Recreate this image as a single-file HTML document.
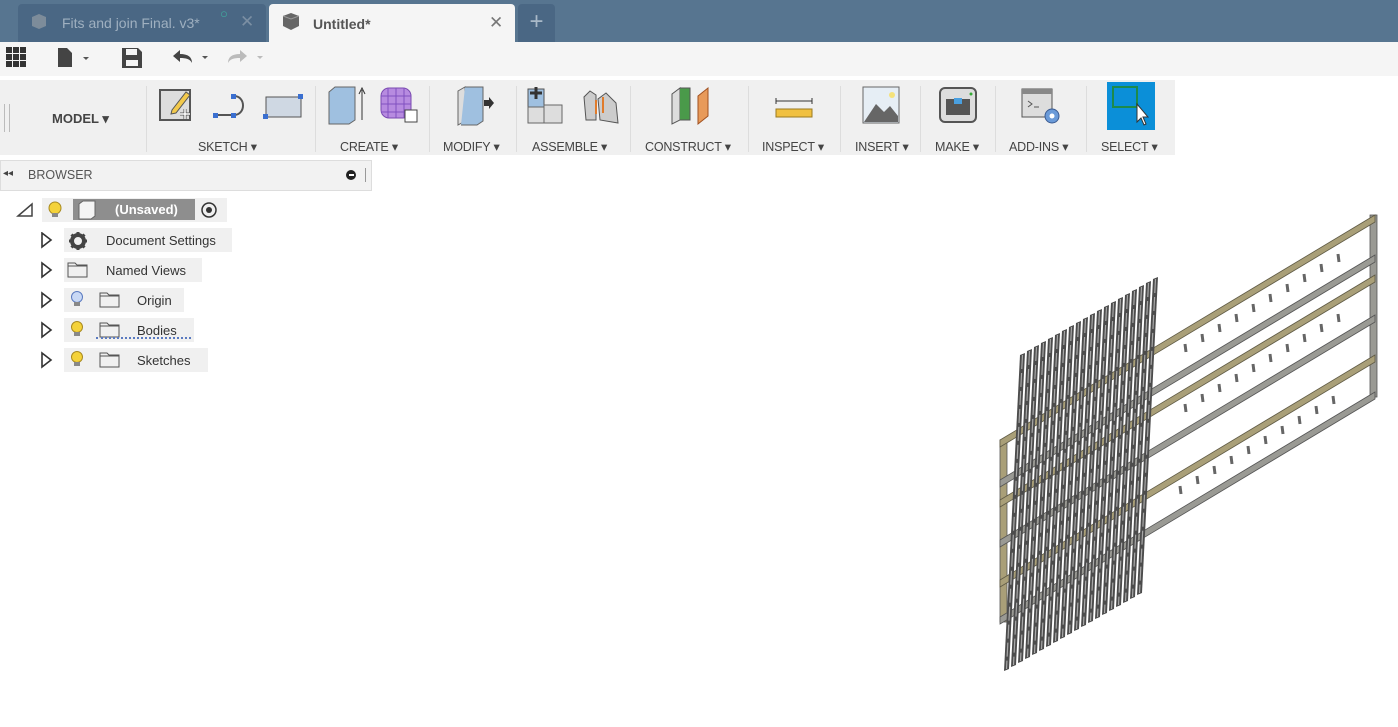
<!DOCTYPE html>
<html><head><meta charset="utf-8"><style>
*{margin:0;padding:0;box-sizing:border-box}
body{width:1398px;height:727px;overflow:hidden;background:#fff;font-family:"Liberation Sans",sans-serif;position:relative}
.a{position:absolute}
.tabbar{left:0;top:0;width:1398px;height:42px;background:#577590}
.tab1{left:18px;top:4px;width:248px;height:38px;background:#4a6784;border-radius:4px 4px 0 0;color:#9fb0c0;font-size:14px}
.tab2{left:269px;top:4px;width:246px;height:38px;background:#f5f5f5;border-radius:4px 4px 0 0;font-size:14px;color:#555}
.tab3{left:518px;top:4px;width:37px;height:38px;background:#4a6784;border-radius:4px 4px 0 0;color:#a9b9c8;font-size:24px;text-align:center;line-height:36px}
.qbar{left:0;top:42px;width:1398px;height:34px;background:#f5f5f5}
.ribbon{left:0;top:80px;width:1175px;height:75px;background:#f0f0f0}
.lbl{font-size:12.5px;color:#444;top:139px;letter-spacing:-0.2px}
.sep{width:1px;background:#ddd;top:86px;height:66px}
.br{left:0;top:160px;width:372px;height:31px;background:#f2f2f2;border:1px solid #ddd}
.row{font-size:13px;color:#333}
.pill{background:#f0f0f0;height:24px}
</style></head><body>
<div class="a tabbar"></div>
<div class="a tab1"><svg class="a" style="left:12px;top:9px" width="18" height="18"><path d="M2 4 L9 1 L16 4 L16 13 L9 16 L2 13Z" fill="#7d8c9a"/></svg><span class="a" style="left:44px;top:11px">Fits and join Final. v3*</span><span class="a" style="left:202px;top:2px;color:#3fb0a0;font-size:13px">○</span><span class="a" style="left:222px;top:8px;font-size:17px;color:#7b8fa3">✕</span></div>
<div class="a tab2"><svg class="a" style="left:12px;top:8px" width="20" height="20"><path d="M2 4 L10 1 L18 4 L18 14 L10 18 L2 14Z" fill="#666"/><path d="M2 4 L10 7 L18 4" stroke="#999" fill="none"/></svg><span class="a" style="left:44px;top:12px;font-weight:bold;color:#555">Untitled*</span><span class="a" style="left:220px;top:9px;font-size:17px;color:#777">✕</span></div>
<div class="a tab3">+</div>
<div class="a qbar"></div>
<svg class="a" style="left:6px;top:47px" width="22" height="22"><g fill="#333"><rect x="0" y="0" width="6" height="6"/><rect x="7" y="0" width="6" height="6"/><rect x="14" y="0" width="6" height="6"/><rect x="0" y="7" width="6" height="6"/><rect x="7" y="7" width="6" height="6"/><rect x="14" y="7" width="6" height="6"/><rect x="0" y="14" width="6" height="6"/><rect x="7" y="14" width="6" height="6"/><rect x="14" y="14" width="6" height="6"/></g></svg>
<svg class="a" style="left:58px;top:48px" width="36" height="20"><path d="M0 0 H9 L14 5 V19 H0Z" fill="#444"/><path d="M25 9 L31 9 L28 12Z" fill="#555"/></svg>
<svg class="a" style="left:121px;top:47px" width="22" height="22"><path d="M1 1 H17 L21 5 V21 H1Z" fill="#444"/><rect x="5" y="2" width="11" height="6" fill="#f5f5f5"/><rect x="5" y="13" width="12" height="6" fill="#f5f5f5"/></svg>
<svg class="a" style="left:172px;top:49px" width="40" height="18"><path d="M8 1 L1 7 L8 13 V9 C14 9 18 10 20 14 C20 8 16 5 8 5Z" fill="#444"/><path d="M30 7 L36 7 L33 10Z" fill="#555"/></svg>
<svg class="a" style="left:226px;top:49px" width="40" height="18"><path d="M14 1 L21 7 L14 13 V9 C8 9 4 10 2 14 C2 8 6 5 14 5Z" fill="#bbb"/><path d="M31 7 L37 7 L34 10Z" fill="#bbb"/></svg>

<div class="a ribbon"></div>
<div class="a" style="left:4px;top:104px;width:1px;height:28px;background:#bbb"></div>
<div class="a" style="left:9px;top:104px;width:1px;height:28px;background:#bbb"></div>
<div class="a" style="left:52px;top:111px;font-size:13px;font-weight:bold;color:#444">MODEL ▾</div>
<div class="a sep" style="left:146px"></div><div class="a sep" style="left:315px"></div><div class="a sep" style="left:429px"></div><div class="a sep" style="left:516px"></div><div class="a sep" style="left:630px"></div><div class="a sep" style="left:748px"></div><div class="a sep" style="left:840px"></div><div class="a sep" style="left:920px"></div><div class="a sep" style="left:995px"></div><div class="a sep" style="left:1086px"></div>
<svg class="a" style="left:158px;top:86px" width="150" height="40">
<rect x="2" y="4" width="30" height="30" fill="#ddd" stroke="#555" stroke-width="2"/><path d="M14 24 L28 6 L32 9 L18 27 L13 28Z" fill="#f2c94c" stroke="#555"/><path d="M22 28 h10 M27 23 v10" stroke="#555" stroke-width="3"/><path d="M22 28 h10 M27 23 v10" stroke="#fff" stroke-width="1.5"/>
<path d="M58 29 H76 M76 10 C88 10 88 29 76 29" fill="none" stroke="#555" stroke-width="2"/><rect x="55" y="27" width="5" height="5" fill="#3a6fd0"/><rect x="73" y="27" width="5" height="5" fill="#3a6fd0"/><rect x="73" y="8" width="5" height="5" fill="#3a6fd0"/>
<rect x="108" y="11" width="35" height="20" fill="#cfd8e3" stroke="#555"/><rect x="105" y="28" width="5" height="5" fill="#3a6fd0"/><rect x="140" y="8" width="5" height="5" fill="#3a6fd0"/></svg>
<svg class="a" style="left:325px;top:84px" width="100" height="44"><path d="M4 8 L10 3 H30 V36 L24 40 H4Z" fill="#9fc0e0" stroke="#666"/><path d="M37 36 V6 M34 10 L37 4 L40 10" stroke="#333" fill="none"/><rect x="56" y="4" width="30" height="30" rx="8" fill="#b78be0" stroke="#7a4ab0"/><path d="M63 4 V34 M71 4 V34 M79 4 V34 M56 12 H86 M56 20 H86 M56 28 H86" stroke="#8050c0"/><rect x="80" y="26" width="12" height="12" fill="#fff" stroke="#444"/></svg>
<svg class="a" style="left:453px;top:85px" width="42" height="42"><path d="M5 6 L12 2 V36 L5 40Z" fill="#ddd" stroke="#666"/><path d="M12 2 H30 V36 L24 40 H8" fill="#9fc0e0" stroke="#666"/><path d="M31 15 H36 V12 L41 18 L36 24 V21 H31Z" fill="#333"/></svg>
<svg class="a" style="left:526px;top:85px" width="96" height="42"><rect x="2" y="4" width="16" height="18" fill="#9fc0e0" stroke="#555"/><rect x="2" y="22" width="16" height="16" fill="#ddd" stroke="#666"/><rect x="18" y="20" width="18" height="18" fill="#ddd" stroke="#666"/><path d="M10 2 v12 M4 8 h12" stroke="#333" stroke-width="3"/><path d="M60 35 L58 12 L64 6 L70 10 V35Z M74 35 L72 14 L80 8 L90 18 L92 38 Z" fill="#ccc" stroke="#555"/><path d="M70 15 v14 M77 12 v16" stroke="#e07b2b" stroke-width="2"/></svg>
<svg class="a" style="left:668px;top:86px" width="44" height="40"><path d="M4 8 L12 2 V34 L4 38Z" fill="#ddd" stroke="#555"/><path d="M12 2 L22 2 V34 L12 34" fill="#4a9a4a" stroke="#555"/><path d="M30 10 L40 2 V30 L30 38Z" fill="#e89a5a" stroke="#a05020"/></svg>
<svg class="a" style="left:774px;top:94px" width="40" height="28"><path d="M2 4 V10 M2 7 H38 M38 4 V10" stroke="#333" fill="none"/><rect x="2" y="15" width="36" height="8" fill="#f0c040" stroke="#9a7a20"/></svg>
<svg class="a" style="left:862px;top:86px" width="38" height="38"><rect x="1" y="1" width="36" height="36" fill="#e6eef5" stroke="#666"/><path d="M2 36 L14 18 L22 26 L28 20 L36 30 V36Z" fill="#666"/><circle cx="30" cy="9" r="3" fill="#f5e27a"/></svg>
<svg class="a" style="left:938px;top:86px" width="40" height="40"><rect x="2" y="2" width="36" height="34" rx="5" fill="#ddd" stroke="#555" stroke-width="2"/><rect x="8" y="13" width="24" height="16" fill="#555"/><path d="M16 12 h8 v6 h-8z" fill="#4aa0e0"/><circle cx="33" cy="8" r="1.5" fill="#3a3"/></svg>
<svg class="a" style="left:1020px;top:87px" width="42" height="40"><rect x="2" y="2" width="30" height="28" fill="#ddd" stroke="#555"/><rect x="2" y="2" width="30" height="5" fill="#888"/><path d="M8 14 l4 3 -4 3 M14 20 h5" stroke="#555" fill="none"/><circle cx="32" cy="29" r="7" fill="#6a9ad8" stroke="#3a5a90"/><circle cx="32" cy="29" r="2.5" fill="#fff"/></svg>
<div class="a" style="left:1107px;top:82px;width:48px;height:48px;background:#0b8fd8"></div>
<svg class="a" style="left:1107px;top:82px" width="48" height="48"><rect x="6" y="5" width="24" height="20" fill="none" stroke="#1d8a4a" stroke-width="2"/><path d="M30 22 V40 L34 36 L37 43 L39 42 L36 35 L41 35Z" fill="#fff" stroke="#333"/></svg>
<div class="a lbl" style="left:198px">SKETCH ▾</div>
<div class="a lbl" style="left:340px">CREATE ▾</div>
<div class="a lbl" style="left:443px">MODIFY ▾</div>
<div class="a lbl" style="left:532px">ASSEMBLE ▾</div>
<div class="a lbl" style="left:645px">CONSTRUCT ▾</div>
<div class="a lbl" style="left:762px">INSPECT ▾</div>
<div class="a lbl" style="left:855px">INSERT ▾</div>
<div class="a lbl" style="left:935px">MAKE ▾</div>
<div class="a lbl" style="left:1009px">ADD-INS ▾</div>
<div class="a lbl" style="left:1101px">SELECT ▾</div>

<div class="a br"></div>
<div class="a" style="left:3px;top:168px;font-size:10px;color:#444">◂◂</div>
<div class="a" style="left:28px;top:168px;font-size:12.5px;color:#555">BROWSER</div>
<div class="a" style="left:346px;top:170px;width:10px;height:10px;border-radius:50%;background:#222"></div><div class="a" style="left:349px;top:174px;width:5px;height:2px;background:#fff"></div>
<div class="a" style="left:365px;top:168px;width:1px;height:14px;background:#999"></div>

<svg class="a" style="left:16px;top:202px" width="20" height="16"><path d="M2 14 L16 2 V14Z" fill="none" stroke="#444" stroke-width="1.5"/></svg>
<div class="a pill" style="left:42px;top:198px;width:185px"></div>
<div class="a" style="left:73px;top:199px;width:122px;height:21px;background:#8e8e8e"></div>
<div class="a" style="left:115px;top:202px;font-size:13px;font-weight:bold;color:#fff">(Unsaved)</div>
<svg class="a" style="left:46px;top:200px" width="20" height="20"><circle cx="9" cy="8" r="6" fill="#f4d23a" stroke="#a88a20"/><rect x="6" y="13" width="6" height="4" fill="#888"/></svg>
<svg class="a" style="left:76px;top:200px" width="22" height="20"><path d="M3 4 L7 1 H19 V16 L15 19 H3Z" fill="#f4f4f4" stroke="#666"/></svg>
<svg class="a" style="left:200px;top:201px" width="18" height="18"><circle cx="9" cy="9" r="7" fill="none" stroke="#333" stroke-width="1.5"/><circle cx="9" cy="9" r="3" fill="#333"/></svg>

<svg class="a" style="left:40px;top:232px" width="14" height="140"><g fill="none" stroke="#333" stroke-width="1.6"><path d="M2 1 L11 8 L2 15Z"/><path d="M2 31 L11 38 L2 45Z"/><path d="M2 61 L11 68 L2 75Z"/><path d="M2 91 L11 98 L2 105Z"/><path d="M2 121 L11 128 L2 135Z"/></g></svg>
<div class="a pill" style="left:64px;top:228px;width:168px"></div>
<div class="a pill" style="left:64px;top:258px;width:138px"></div>
<div class="a pill" style="left:64px;top:288px;width:120px"></div>
<div class="a pill" style="left:64px;top:318px;width:130px"></div>
<div class="a pill" style="left:64px;top:348px;width:144px"></div>
<svg class="a" style="left:68px;top:231px" width="20" height="20"><circle cx="10" cy="10" r="6" fill="none" stroke="#444" stroke-width="4"/><g stroke="#444" stroke-width="3"><path d="M10 1v4M10 15v4M1 10h4M15 10h4M3.5 3.5l3 3M13.5 13.5l3 3M3.5 16.5l3-3M13.5 6.5l3-3"/></g><circle cx="10" cy="10" r="2.5" fill="#f0f0f0"/></svg>
<div class="a row" style="left:106px;top:233px">Document Settings</div>
<svg class="a" style="left:67px;top:262px" width="22" height="16"><path d="M1 1 H8 L10 3 H20 V15 H1Z" fill="none" stroke="#555"/><path d="M1 4 H20" stroke="#555"/></svg>
<div class="a row" style="left:106px;top:263px">Named Views</div>
<svg class="a" style="left:68px;top:290px" width="18" height="20"><circle cx="9" cy="7" r="5.5" fill="#c8d8f5" stroke="#5a7ac0"/><rect x="6" y="12" width="6" height="4" fill="#888"/></svg>
<svg class="a" style="left:99px;top:292px" width="22" height="16"><path d="M1 1 H8 L10 3 H20 V15 H1Z" fill="none" stroke="#555"/><path d="M1 4 H20" stroke="#555"/></svg>
<div class="a row" style="left:137px;top:293px">Origin</div>
<svg class="a" style="left:68px;top:320px" width="18" height="20"><circle cx="9" cy="7" r="5.5" fill="#f4d23a" stroke="#a88a20"/><rect x="6" y="12" width="6" height="4" fill="#888"/></svg>
<svg class="a" style="left:99px;top:322px" width="22" height="16"><path d="M1 1 H8 L10 3 H20 V15 H1Z" fill="none" stroke="#555"/><path d="M1 4 H20" stroke="#555"/></svg>
<div class="a row" style="left:137px;top:323px">Bodies</div>
<div class="a" style="left:96px;top:337px;width:95px;height:3px;border-top:2px dotted #5a7ac0"></div>
<svg class="a" style="left:68px;top:350px" width="18" height="20"><circle cx="9" cy="7" r="5.5" fill="#f4d23a" stroke="#a88a20"/><rect x="6" y="12" width="6" height="4" fill="#888"/></svg>
<svg class="a" style="left:99px;top:352px" width="22" height="16"><path d="M1 1 H8 L10 3 H20 V15 H1Z" fill="none" stroke="#555"/><path d="M1 4 H20" stroke="#555"/></svg>
<div class="a row" style="left:137px;top:353px">Sketches</div>

<svg class="a" style="left:0;top:0" width="1398" height="727">
<defs>
<polygon id="rg" points="0,0 375,-225 375,-218 0,7" fill="#a99f78" stroke="#5f5a45" stroke-width="0.8"/>
<polygon id="rs" points="0,0 375,-225 375,-218 0,7" fill="#9a9a94" stroke="#555" stroke-width="0.8"/>
<g id="sl"><polygon points="17,0 22,-2 6,314 1,316" fill="#4c4c4c"/><line x1="19.5" y1="0" x2="3.5" y2="314" stroke="#a8a8a8" stroke-width="1.2" stroke-dasharray="14,4"/></g>
<g id="dots" stroke="#666" stroke-width="3"><path d="M0 0 l1 8 M17 -10 l1 8 M34 -20 l1 8 M51 -30 l1 8 M68 -40 l1 8 M85 -50 l1 8 M102 -60 l1 8 M119 -70 l1 8 M136 -80 l1 8 M153 -90 l1 8"/></g>
</defs>
<rect x="1000" y="440" width="7" height="182" fill="#a99f78" stroke="#555" stroke-width="0.8"/>
<rect x="1370" y="215" width="7" height="182" fill="#9a9a94" stroke="#555" stroke-width="0.8"/>
<use href="#rg" x="1000" y="440"/><use href="#rs" x="1000" y="480"/>
<use href="#rg" x="1000" y="500"/><use href="#rs" x="1000" y="540"/>
<use href="#rg" x="1000" y="580"/><use href="#rs" x="1000" y="617"/>
<use href="#dots" x="1185" y="344"/><use href="#dots" x="1185" y="404"/><use href="#dots" x="1180" y="486"/>
<g>
<use href="#sl" x="1003" y="355"/><use href="#sl" x="1010" y="351"/><use href="#sl" x="1017" y="347"/><use href="#sl" x="1024" y="343"/><use href="#sl" x="1031" y="339"/><use href="#sl" x="1038" y="335"/><use href="#sl" x="1045" y="331"/><use href="#sl" x="1052" y="327"/><use href="#sl" x="1059" y="323"/><use href="#sl" x="1066" y="319"/><use href="#sl" x="1073" y="315"/><use href="#sl" x="1080" y="311"/><use href="#sl" x="1087" y="307"/><use href="#sl" x="1094" y="303"/><use href="#sl" x="1101" y="299"/><use href="#sl" x="1108" y="295"/><use href="#sl" x="1115" y="291"/><use href="#sl" x="1122" y="287"/><use href="#sl" x="1129" y="283"/><use href="#sl" x="1136" y="279"/>
</g>
</svg>
</body></html>
